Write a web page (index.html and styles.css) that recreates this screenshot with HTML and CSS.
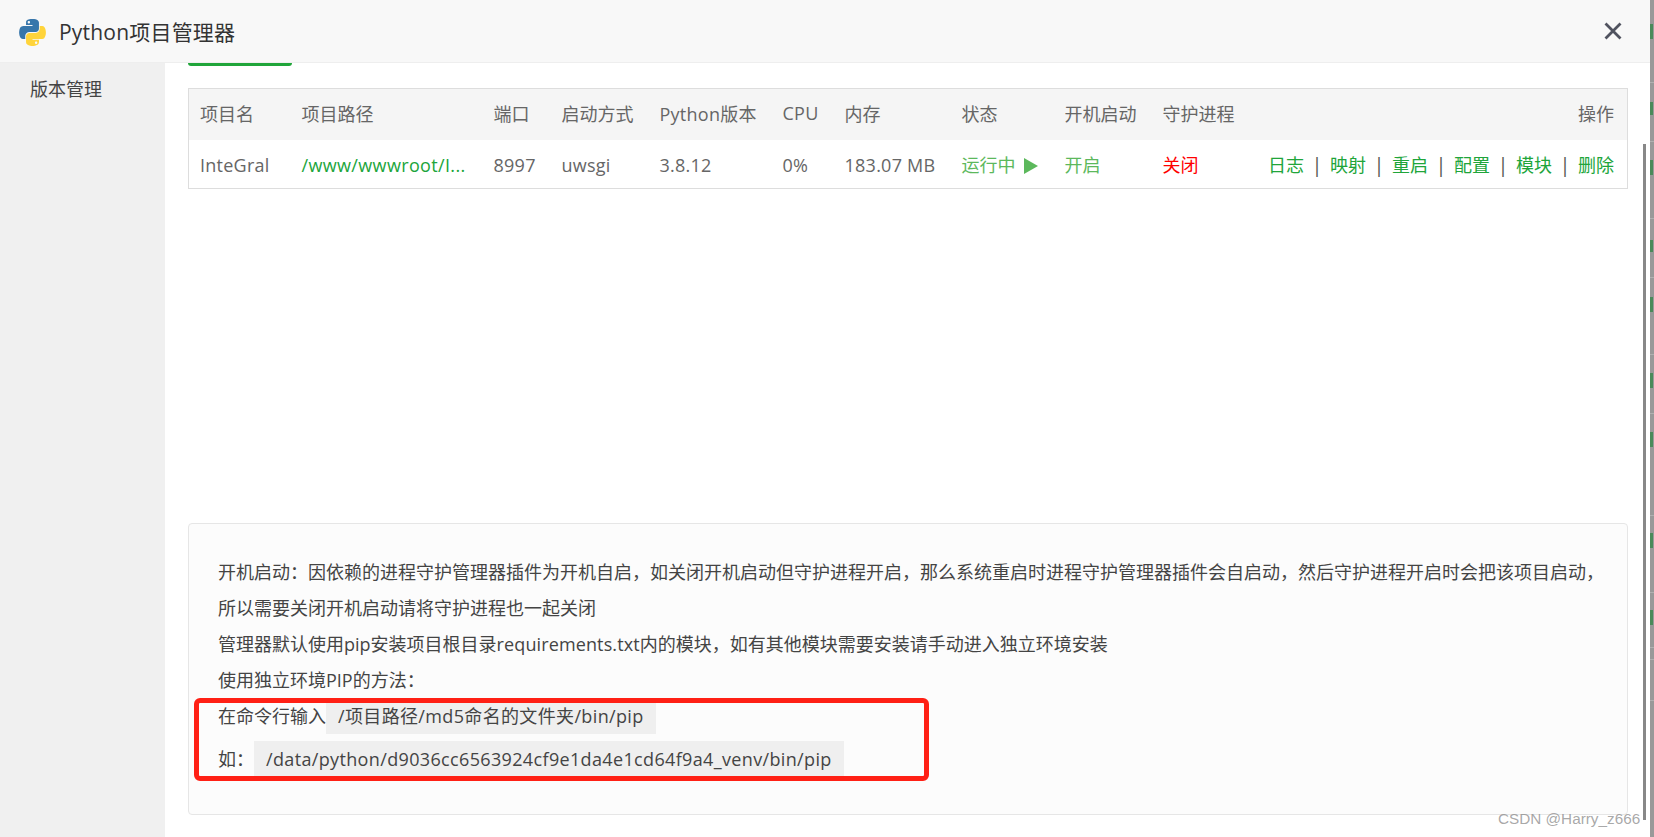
FILE: index.html
```html
<!DOCTYPE html>
<html lang="zh-CN">
<head>
  <meta charset="UTF-8">
  <meta name="viewport" content="width=device-width, initial-scale=1.0">
  <link rel="stylesheet" href="styles.css">
  <title>Python项目管理器</title>
</head>
<body>

  <div class="dialog">
    <header class="titlebar">
      <svg class="logo" viewBox="0 0 111 112">
        <path fill="#3776ab" d="M54.919,0.001c-4.584,0.021-8.961,0.412-12.812,1.094C30.760,3.099,28.700,7.295,28.700,15.032v10.219h26.812v3.406H28.700h-10.063c-7.792,0-14.616,4.684-16.750,13.594c-2.462,10.213-2.571,16.586,0,27.250c1.906,7.938,6.458,13.594,14.250,13.594h9.219v-12.250c0-8.850,7.657-16.656,16.750-16.656h26.781c7.455,0,13.406-6.138,13.406-13.625V15.032c0-7.266-6.130-12.725-13.406-13.937C64.282,0.328,59.502-0.020,54.919,0.001z M40.419,8.220c2.770,0,5.031,2.299,5.031,5.125c0,2.816-2.262,5.094-5.031,5.094c-2.779,0-5.031-2.277-5.031-5.094C35.388,10.519,37.640,8.220,40.419,8.220z"/>
        <path fill="#ffd43b" d="M85.638,28.657v11.906c0,9.231-7.826,17-16.750,17H42.106c-7.336,0-13.406,6.278-13.406,13.625v25.531c0,7.266,6.319,11.540,13.406,13.625c8.487,2.496,16.626,2.947,26.781,0c6.750-1.954,13.406-5.888,13.406-13.625V86.500H55.513v-3.406h26.781h13.406c7.792,0,10.696-5.436,13.406-13.594c2.799-8.399,2.680-16.476,0-27.250c-1.926-7.757-5.604-13.594-13.406-13.594H85.638z M70.575,93.313c2.779,0,5.031,2.277,5.031,5.094c0,2.826-2.252,5.125-5.031,5.125c-2.770,0-5.031-2.299-5.031-5.125C65.544,95.590,67.805,93.313,70.575,93.313z"/>
      </svg>
      <span class="title">Python项目管理器</span>
      <svg class="close" viewBox="0 0 18 18">
        <path d="M1.5 1.5 L16.5 16.5 M16.5 1.5 L1.5 16.5" stroke="#50535f" stroke-width="2.8" fill="none"/>
      </svg>
    </header>

    <div class="layout">
      <aside class="sidebar">版本管理</aside>

      <main class="content">
        <div class="tab-line"></div>

        <div class="list">
          <table class="projects">
            <colgroup>
              <col class="c-name"><col class="c-path"><col class="c-port"><col class="c-mode">
              <col class="c-ver"><col class="c-cpu"><col class="c-mem"><col class="c-status">
              <col class="c-boot"><col class="c-guard"><col>
            </colgroup>
            <thead>
              <tr>
                <th class="first">项目名</th>
                <th>项目路径</th>
                <th>端口</th>
                <th>启动方式</th>
                <th class="en">Python版本</th>
                <th class="en">CPU</th>
                <th>内存</th>
                <th>状态</th>
                <th>开机启动</th>
                <th>守护进程</th>
                <th class="right">操作</th>
              </tr>
            </thead>
            <tbody>
              <tr>
                <td class="en first">InteGral</td>
                <td class="en"><a class="path">/www/wwwroot/I...</a></td>
                <td class="en">8997</td>
                <td class="en">uwsgi</td>
                <td class="en">3.8.12</td>
                <td class="en">0%</td>
                <td class="en">183.07 MB</td>
                <td class="ok">运行中<span class="play"></span></td>
                <td class="ok">开启</td>
                <td class="off">关闭</td>
                <td class="right ops">
                  <a>日志</a><span class="sep">|</span><a>映射</a><span class="sep">|</span><a>重启</a><span class="sep">|</span><a>配置</a><span class="sep">|</span><a>模块</a><span class="sep">|</span><a>删除</a>
                </td>
              </tr>
            </tbody>
          </table>
        </div>

        <div class="tips">
          <p>开机启动：因依赖的进程守护管理器插件为开机自启，如关闭开机启动但守护进程开启，那么系统重启时进程守护管理器插件会自启动，然后守护进程开启时会把该项目启动，</p>
          <p>所以需要关闭开机启动请将守护进程也一起关闭</p>
          <p>管理器默认使用pip安装项目根目录<span class="word">requirements.txt</span>内的模块，如有其他模块需要安装请手动进入独立环境安装</p>
          <p>使用独立环境PIP的方法：</p>
          <p class="cmd">在命令行输入<code>/项目路径/md5命名的文件夹/bin/pip</code></p>
          <p>如：<code>/data/python/d9036cc6563924cf9e1da4e1cd64f9a4_venv/bin/pip</code></p>
          <div class="mark"></div>
        </div>
      </main>
    </div>

    <div class="scrollbar"></div>
  </div>

  <!-- sliver of the page behind the dialog -->
  <svg class="edge" viewBox="0 0 4 837" preserveAspectRatio="none">
    <g fill="#b0b0b0">
      <rect y="82" width="4" height="1"/><rect y="141" width="4" height="1"/><rect y="218" width="4" height="1"/>
      <rect y="277" width="4" height="1"/><rect y="354" width="4" height="1"/><rect y="413" width="4" height="1"/>
      <rect y="515" width="4" height="1"/><rect y="592" width="4" height="1"/><rect y="647" width="4" height="1"/>
      <rect y="659" width="4" height="1"/><rect y="700" width="4" height="1"/>
    </g>
    <g fill="#4a8a5a">
      <rect y="24" width="3" height="15"/><rect y="102" width="3" height="13"/><rect y="160" width="3" height="15"/>
      <rect y="240" width="3" height="12"/><rect y="297" width="3" height="15"/><rect y="373" width="3" height="15"/>
      <rect y="432" width="3" height="15"/><rect y="533" width="3" height="15"/><rect y="610" width="3" height="15"/>
    </g>
  </svg>

  <div class="watermark">CSDN @Harry_z666</div>

</body>
</html>
```

FILE: styles.css
```css
html, body {
  height: 100%;
}

body {
  margin: 0;
  display: flex;
  overflow: hidden;
  background-color: #fff;
  font-family: "Open Sans", "Noto Sans CJK SC", sans-serif;
  font-size: 18px;
  color: #666;
}

.dialog {
  position: relative;
  width: 1650px;
  height: 837px;
  display: flex;
  flex-direction: column;
  background-color: #fff;
}

.titlebar {
  height: 62px;
  display: flex;
  align-items: center;
  padding: 0 28px 0 19px;
  background-color: #f8f8f8;
  border-bottom: 1px solid #eee;
}

.logo {
  width: 27px;
  height: 27px;
  margin: 2px 13px 0 0;
}

.title {
  font-size: 21px;
  letter-spacing: 0.2px;
  color: #333;
}

.close {
  width: 18px;
  height: 18px;
  margin-left: auto;
}

.layout {
  flex: 1;
  display: flex;
}

.sidebar {
  width: 135px;
  padding: 11px 0 0 30px;
  line-height: 30px;
  background-color: #f0f0f0;
  color: #444;
}

.content {
  flex: 1;
  padding: 0 22px 0 23px;
}

.tab-line {
  width: 104px;
  height: 3px;
  background-color: #20a53a;
  border-radius: 0 0 4px 4px;
}

.list {
  height: 457px;
  padding-top: 22px;
  box-sizing: border-box;
}

.projects {
  width: 100%;
  table-layout: fixed;
  border-collapse: collapse;
  border: 1px solid #ddd;
}

.projects th {
  height: 48px;
  padding: 0 0 3px 12px;
  font-weight: normal;
  text-align: left;
  background-color: #f5f5f5;
  white-space: nowrap;
}

.projects td {
  height: 48px;
  padding: 0 0 0 12px;
  white-space: nowrap;
}

.projects .en {
  letter-spacing: 0.25px;
}

.projects td.en {
  padding-top: 2px;
  height: 46px;
}

.projects .first {
  padding-left: 11px;
}

.c-name { width: 101px; }
.c-path { width: 192px; }
.c-port { width: 68px; }
.c-mode { width: 98px; }
.c-ver { width: 123px; }
.c-cpu { width: 62px; }
.c-mem { width: 117px; }
.c-status { width: 103px; }
.c-boot { width: 98px; }
.c-guard { width: 105px; }

.projects .right {
  padding-right: 13px;
  text-align: right;
}

.path {
  color: #20a53a;
  letter-spacing: 0.35px;
}

.ok {
  color: #5cb85c;
}

.off {
  color: #f00;
}

.play {
  display: inline-block;
  margin-left: 8px;
  border-left: 14px solid #5cb85c;
  border-top: 8px solid transparent;
  border-bottom: 8px solid transparent;
  vertical-align: -2px;
}

.ops a {
  color: #20a53a;
}

.sep {
  display: inline-block;
  width: 26px;
  text-align: center;
  font-size: 20px;
  line-height: 24px;
  color: #555;
}

.tips {
  position: relative;
  height: 260px;
  padding: 30px 0 0 29px;
  background-color: #fcfcfc;
  border: 1px solid #e6e6e6;
  border-radius: 4px;
  color: #444;
}

.tips p {
  margin: 0;
  line-height: 36px;
  white-space: nowrap;
}

.tips .cmd {
  margin-bottom: 7px;
}

.tips .word {
  letter-spacing: 0.12px;
}

.tips code {
  display: inline-block;
  padding: 0 12px;
  font-family: inherit;
  letter-spacing: 0.35px;
  background-color: #efefef;
}

.mark {
  position: absolute;
  left: 5px;
  top: 174px;
  width: 725px;
  height: 73px;
  border: 5px solid #ff2015;
  border-radius: 6px;
}

.scrollbar {
  position: absolute;
  right: 4px;
  top: 144px;
  width: 3px;
  height: 676px;
  background-color: #888;
}

.edge {
  width: 4px;
  height: 837px;
  background-color: #999;
}

.watermark {
  position: absolute;
  left: 1498px;
  top: 810px;
  font-family: "Liberation Sans", sans-serif;
  font-size: 15.3px;
  line-height: 18px;
  color: rgba(130, 130, 130, 0.7);
}
```
